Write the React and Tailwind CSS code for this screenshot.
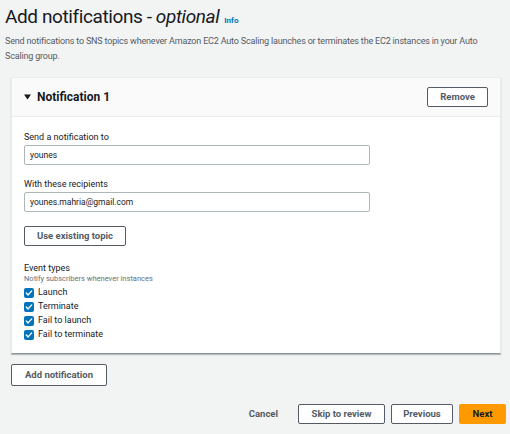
import React from 'react'

const events = ['Launch', 'Terminate', 'Fail to launch', 'Fail to terminate']

const Check = () => (
    <span className="w-[10px] h-[10px] rounded-[2px] bg-[#0073bb] flex items-center justify-center shrink-0">
        <svg width="8" height="8" viewBox="0 0 8 8" fill="none">
            <path d="M1.3 4.1 L3.1 5.9 L6.7 1.9" stroke="white" strokeWidth="1.4" strokeLinecap="round" strokeLinejoin="round" />
        </svg>
    </span>
)

const OutlineButton = ({ children, className = '' }) => (
    <button className={`h-[20px] border border-[#545b64] rounded-[2px] bg-white text-[9.5px] font-bold text-[#545b64] leading-none whitespace-nowrap flex items-center justify-center ${className}`}>
        {children}
    </button>
)

export default function App() {
    return (
        <div className="w-[510px] h-[434px] bg-[#f2f3f3] text-[#16191f] overflow-hidden" style={{ fontFamily: 'Roboto, "Noto Sans", sans-serif' }}>
            <div className="px-[5px] pt-[5px]">
                <h1 className="text-[19px] leading-[24px] tracking-[-0.4px] text-[#16191f] flex items-baseline">
                    <span>Add notifications - <i>optional</i></span>
                    <span className="ml-[5px] text-[8px] tracking-normal font-bold text-[#0073bb]">Info</span>
                </h1>
                <p className="mt-[1px] text-[9px] leading-[15px] tracking-[-0.18px] text-[#545b64]">
                    Send notifications to SNS topics whenever Amazon EC2 Auto Scaling launches or terminates the EC2 instances in your Auto Scaling group.
                </p>
            </div>

            <div className="mx-[11px] mt-[13px] w-[490px] bg-white border border-[#eaeded] border-b-[#879596] shadow-[0_1px_1px_rgba(0,28,36,0.25)]">
                <div className="h-[39px] bg-[#fafafa] border-b border-[#eaeded] flex items-center justify-between pl-[12px] pr-[12px]">
                    <div className="flex items-center gap-[6px]">
                        <svg width="7" height="6" viewBox="0 0 7 6"><path d="M0 0.5 H7 L3.5 5.5 Z" fill="#16191f" /></svg>
                        <span className="text-[12px] font-bold">Notification 1</span>
                    </div>
                    <OutlineButton className="w-[61px]">Remove</OutlineButton>
                </div>

                <div className="px-[12px] pt-[14px] pb-[11px]">
                    <div className="text-[9px] leading-[12px]">Send a notification to</div>
                    <div className="mt-[2px] w-[346px] h-[20px] border border-[#aab7b8] rounded-[2px] px-[5px] flex items-center text-[8.5px]">younes</div>

                    <div className="mt-[13px] text-[9px] leading-[12px]">With these recipients</div>
                    <div className="mt-[2px] w-[346px] h-[20px] border border-[#aab7b8] rounded-[2px] px-[5px] flex items-center text-[8.5px]">younes.mahria@gmail.com</div>

                    <OutlineButton className="mt-[14px] w-[102px]">Use existing topic</OutlineButton>

                    <div className="mt-[16px] text-[9px] leading-[12px]">Event types</div>
                    <div className="text-[7.5px] leading-[10px] text-[#687078]">Notify subscribers whenever instances</div>
                    <div className="mt-[2px] flex flex-col">
                        {events.map((e) => (
                            <label key={e} className="flex items-center gap-[4px] h-[14px] text-[9px]">
                                <Check />
                                <span>{e}</span>
                            </label>
                        ))}
                    </div>
                </div>
            </div>

            <div className="mx-[11px] mt-[10px]">
                <OutlineButton className="h-[22px] w-[96px]">Add notification</OutlineButton>
            </div>

            <div className="mt-[18px] pr-[4px] flex justify-end items-center gap-[6px]">
                <button className="text-[9.5px] font-bold text-[#545b64] px-[14px] h-[20px]">Cancel</button>
                <OutlineButton className="w-[87px]">Skip to review</OutlineButton>
                <OutlineButton className="w-[62px]">Previous</OutlineButton>
                <button className="w-[47px] h-[20px] rounded-[2px] bg-[#ff9900] text-[9.5px] font-bold text-[#16191f]">Next</button>
            </div>
        </div>
    )
}
